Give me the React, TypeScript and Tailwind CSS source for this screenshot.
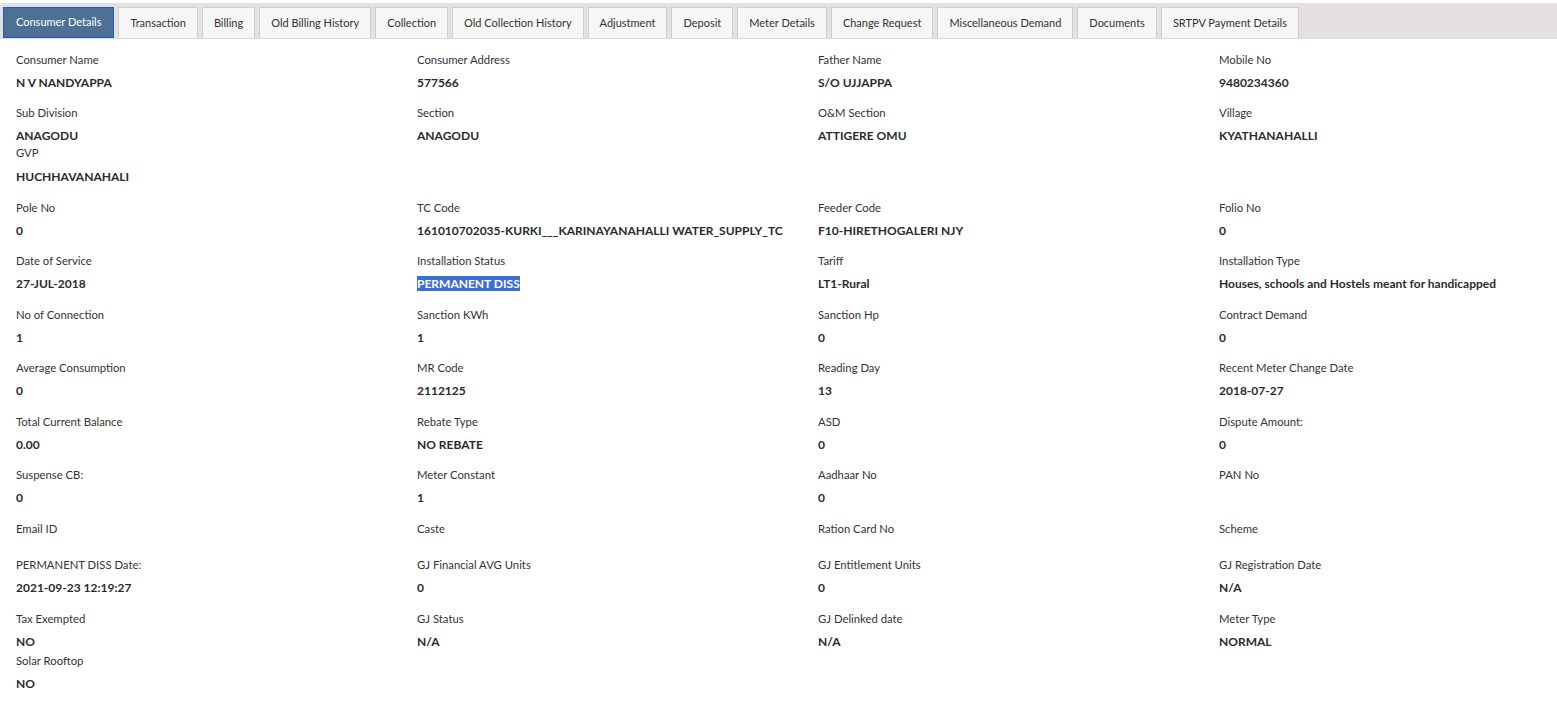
import React from 'react';

type Field = {
  label: string;
  value?: string;
  highlight?: boolean;
  extra?: { label: string; value: string; top: string; gap: string };
};

const tabs = [
  'Consumer Details',
  'Transaction',
  'Billing',
  'Old Billing History',
  'Collection',
  'Old Collection History',
  'Adjustment',
  'Deposit',
  'Meter Details',
  'Change Request',
  'Miscellaneous Demand',
  'Documents',
  'SRTPV Payment Details'
];

const rows: Field[][] = [
  [
    { label: 'Consumer Name', value: 'N V NANDYAPPA' },
    { label: 'Consumer Address', value: '577566' },
    { label: 'Father Name', value: 'S/O UJJAPPA' },
    { label: 'Mobile No', value: '9480234360' }
  ],
  [
    {
      label: 'Sub Division',
      value: 'ANAGODU',
      extra: { label: 'GVP', value: 'HUCHHAVANAHALI', top: 'mt-0', gap: 'mb-[7px]' }
    },
    { label: 'Section', value: 'ANAGODU' },
    { label: 'O&M Section', value: 'ATTIGERE OMU' },
    { label: 'Village', value: 'KYATHANAHALLI' }
  ],
  [
    { label: 'Pole No', value: '0' },
    { label: 'TC Code', value: '161010702035-KURKI___KARINAYANAHALLI WATER_SUPPLY_TC' },
    { label: 'Feeder Code', value: 'F10-HIRETHOGALERI NJY' },
    { label: 'Folio No', value: '0' }
  ],
  [
    { label: 'Date of Service', value: '27-JUL-2018' },
    { label: 'Installation Status', value: 'PERMANENT DISS', highlight: true },
    { label: 'Tariff', value: 'LT1-Rural' },
    { label: 'Installation Type', value: 'Houses, schools and Hostels meant for handicapped' }
  ],
  [
    { label: 'No of Connection', value: '1' },
    { label: 'Sanction KWh', value: '1' },
    { label: 'Sanction Hp', value: '0' },
    { label: 'Contract Demand', value: '0' }
  ],
  [
    { label: 'Average Consumption', value: '0' },
    { label: 'MR Code', value: '2112125' },
    { label: 'Reading Day', value: '13' },
    { label: 'Recent Meter Change Date', value: '2018-07-27' }
  ],
  [
    { label: 'Total Current Balance', value: '0.00' },
    { label: 'Rebate Type', value: 'NO REBATE' },
    { label: 'ASD', value: '0' },
    { label: 'Dispute Amount:', value: '0' }
  ],
  [
    { label: 'Suspense CB:', value: '0' },
    { label: 'Meter Constant', value: '1' },
    { label: 'Aadhaar No', value: '0' },
    { label: 'PAN No' }
  ],
  [{ label: 'Email ID' }, { label: 'Caste' }, { label: 'Ration Card No' }, { label: 'Scheme' }],
  [
    { label: 'PERMANENT DISS Date:', value: '2021-09-23 12:19:27' },
    { label: 'GJ Financial AVG Units', value: '0' },
    { label: 'GJ Entitlement Units', value: '0' },
    { label: 'GJ Registration Date', value: 'N/A' }
  ],
  [
    {
      label: 'Tax Exempted',
      value: 'NO',
      extra: { label: 'Solar Rooftop', value: 'NO', top: 'mt-[2px]', gap: 'mb-[6px]' }
    },
    { label: 'GJ Status', value: 'N/A' },
    { label: 'GJ Delinked date', value: 'N/A' },
    { label: 'Meter Type', value: 'NORMAL' }
  ]
];

const Value: React.FC<{ text?: string; highlight?: boolean }> = ({ text, highlight }) => {
  if (!text) return null;
  return (
    <div className="text-[12px] font-bold leading-[17px] text-[#2b2b2b]">
      {highlight ? <span className="bg-[#3b6fd8] text-white">{text}</span> : text}
    </div>
  );
};

export default function App() {
  return (
    <div className="min-h-screen bg-white font-['Lato','Noto_Sans',sans-serif] text-[#333]">
      <div className="pt-[3px]">
        <div className="flex gap-[4px] border-b border-[#dcdcdc] bg-[#e4e1e0] px-[3px] pt-[4px]">
          {tabs.map((tab, i) => (
            <div
              key={tab}
              className={
                i === 0
                  ? 'flex h-[31px] items-center border border-[#2457d8] bg-[#4d7094] px-[12px] text-[11px] text-white'
                  : 'flex h-[31px] items-center border border-b-0 border-[#cfcfcf] bg-[#f6f6f6] px-[11px] text-[11px] text-[#333]'
              }
            >
              {tab}
            </div>
          ))}
        </div>
      </div>

      <div className="pl-[16px] pt-[11.5px]">
        {rows.map((row, r) => (
          <div key={r} className="mb-[13.5px] grid grid-cols-[401px_401px_401px_1fr]">
            {row.map((f) => (
              <div key={f.label}>
                <div className="mb-[6px] text-[11.3px] leading-[17px]">{f.label}</div>
                <Value text={f.value} highlight={f.highlight} />
                {f.extra && (
                  <div className={f.extra.top}>
                    <div className={`${f.extra.gap} text-[11.3px] leading-[17px]`}>{f.extra.label}</div>
                    <Value text={f.extra.value} />
                  </div>
                )}
              </div>
            ))}
          </div>
        ))}
      </div>
    </div>
  );
}
